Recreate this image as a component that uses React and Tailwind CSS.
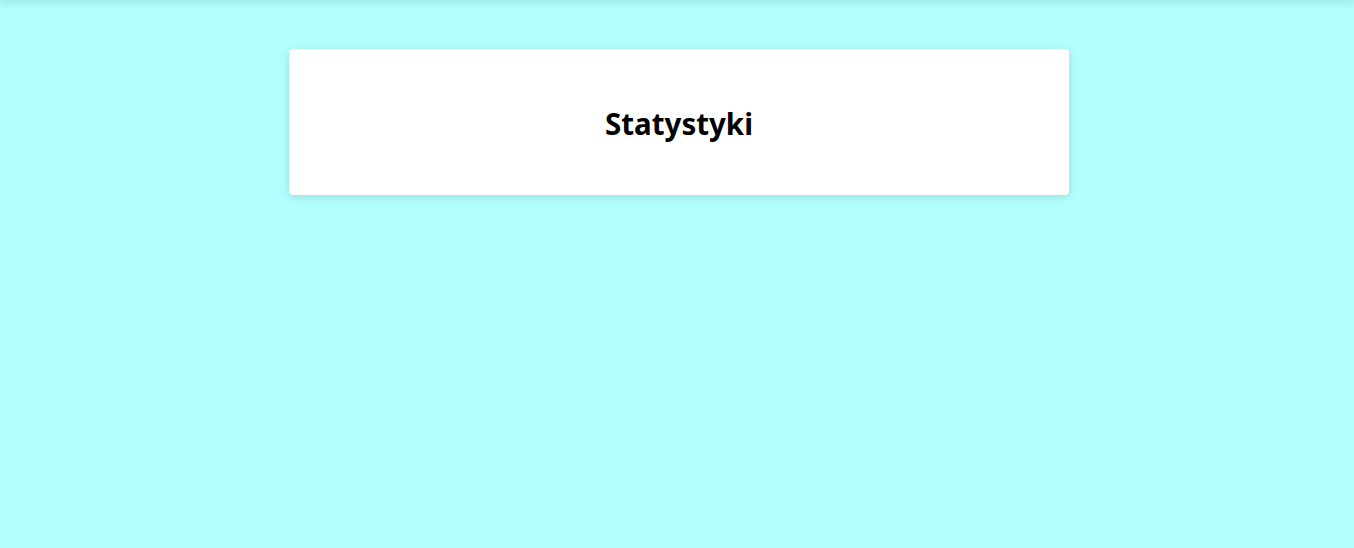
export default function App() {
  return (
    <div className="min-h-[548px] bg-[#b3ffff]">
      {/* top bar, only its shadow shows */}
      <div className="h-0 shadow-[0_0_8px_2px_rgba(0,0,0,0.2)]" />

      <main className="pt-[49px] pl-1">
        <div className="mx-auto w-[780px] h-[146px] bg-white rounded shadow-[0_2px_8px_rgba(0,0,0,0.15)] flex items-center justify-center">
          <h1
            className="text-[29.5px] font-bold text-black pt-1"
            style={{ fontFamily: '"Noto Sans", "Open Sans", sans-serif' }}
          >
            Statystyki
          </h1>
        </div>
      </main>
    </div>
  );
}
